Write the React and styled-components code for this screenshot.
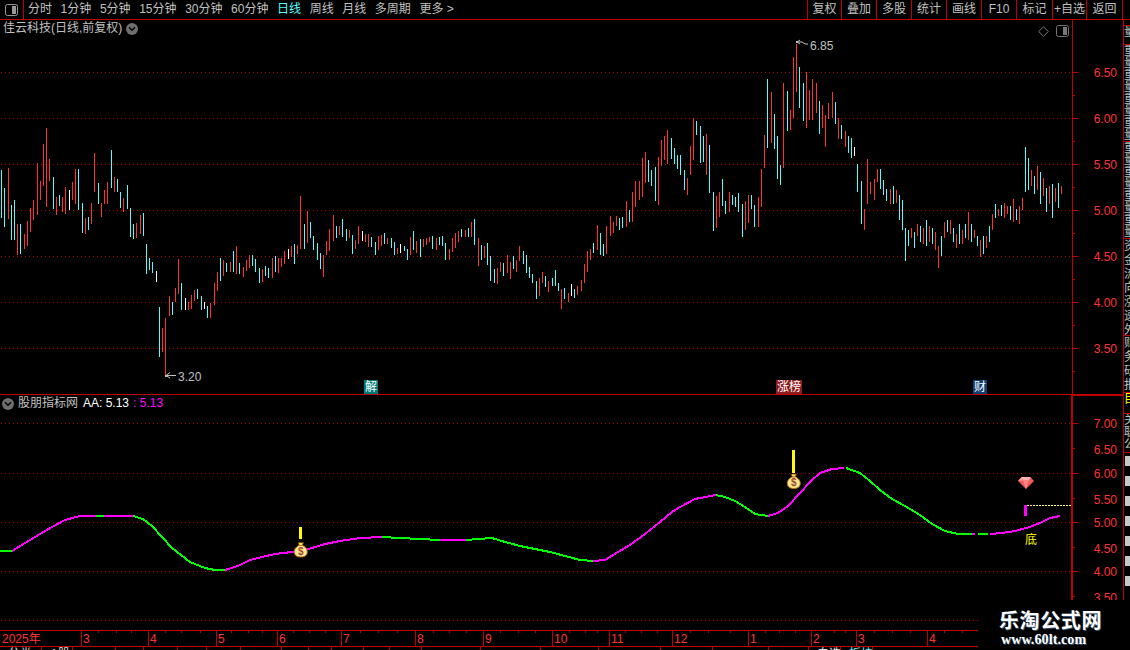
import React from 'react';
import styled, { createGlobalStyle } from 'styled-components';

const RED = '#c00000';
const UP = '#ff3232';
const DOWN = '#54fcfc';
const GREY = '#c0c0c0';

// candles read off the chart: "<x><colour><top>,<bottom>", r = up, c = down, w = flat
const parseBars = (src, x0, y0, scale) =>
  src.trim().split(/\s+/).map((item) => {
    const m = item.match(/^(\d+)([rcw])(\d+),(\d+)$/);
    return {
      x: x0 + Math.floor(+m[1] / scale),
      top: y0 + +m[3] / scale,
      bottom: y0 + +m[4] / scale,
      kind: m[2],
    };
  });

const barsA = parseBars(`
4c150,293 13c204,320 25r144,297 34c255,359 43c240,359 52r312,405 61c312,402 72r342,387 81r303,378 90r264,336
99r240,300 112r129,285 121r183,240 130r72,198 139r24,261 148r117,183 159c171,267 169r231,285 178c225,258 187r231,276
196r201,282 208w210,270 217r186,240 226r147,252 235c147,270 247c249,339 256r294,342 265c291,330 274r249,312 283r99,216
295c189,252 304r249,291 313r210,252 322r186,252 334c90,204 343r171,216 352c177,216 361c216,264 370r234,276 381c195,267
391c264,351 400c312,357 409r309,354 421r285,342 430c279,348 439c372,462 448c414,450 457c426,459 469w453,486 478c561,711
487r624,696 496r594,768 508r528,588 517c546,585 526r504,546 535r417,522 544c489,570 556w534,570 565r546,570 574r525,567
583r510,543 592c507,537 604c528,570 613w546,567 622c558,594 631r549,594 643r489,555 652r456,513 661c414,483 670r420,468
679c429,456 690r426,456 700c393,456 709r378,462 718c429,462 730r441,471 739r420,453 748r405,444 757c405,438 766c417,456
778c444,489 787r447,486 796c438,468 805c444,474 817r414,474 826c408,456 835r414,459 844r414,441 853r393,432 865w387,417
874r378,411 883c372,432 892r375,402`, 0, 120, 3);

const barsB = parseBars(`
1r258,417 13c342,417 22r303,399 31c336,384 40c378,420 52c399,450 61c429,477 70r435,501 79r393,435 88r357,423 100r315,393
109c348,384 118r348,375 127c327,381 139c357,393 148r360,384 157c375,432 166r390,417 175r348,402 187w363,393 196r372,396
205r372,411 214c381,411 226c396,435 235r378,420 244r375,408 253c369,402 262r384,402 274c384,414 283c396,435 292r414,432
301w402,429 313c408,423 322c417,450 331r381,435 340c363,420 349r393,429 361c387,441 370r387,411 379r384,405 388r381,396
397c378,417 409r384,420 418c381,405 427c378,408 436c399,450 448r417,450 457r384,426 466r369,414 475r363,396 484c357,381
496r360,381 505c354,381 514r336,381 523c327,405 535r384,468 544c405,450 553r408,444 562c399,465 571c438,513 583c477,519
592r474,522 601r456,486 610c459,498 622r435,489 631r456,507 640c438,477 649r450,486 658r408,453 670c423,462 679c435,489
688c471,504 697c492,519 709c513,567 718r504,558 727r486,519 736c498,531 745r513,546 757c504,528 766c480,528 775c519,543
784r537,597 793c534,567 805r549,576 814w522,558 823c537,564 832r528,555 844r510,543 853r462,519 862r423,486 871r417,450
880c399,429 892r345,420 901c369,435 910c402,438 919r348,432 931r318,378 940r336,369 949r318,348 958c324,360 967c321,354
979r273,351 988c300,336 997r246,336 1006r213,291 1018r213,270 1027r144,261 1036r126,219 1045c150,216 1054c180,228
1066c171,273 1075r141,285 1084r90,168 1093r78,150 1102r60,162 1114c84,147 1123c114,162 1132c135,177 1141c135,195
1153c180,240 1162r204,255 1171r108,195 1180r24,150 1189c33,75 1201c48,159 1210c78,156 1219r72,195 1228c105,249
1240c246,363 1249r258,354 1258r246,321 1267c207,288 1276c273,312 1288r246,306 1297c255,285 1306c261,291 1315c249,306`, 300, 110, 3);

const barsC = parseBars(`
7c522,620 16r513,600 25r495,580 34c495,537 43c525,590 55r501,590 64r417,531 73r315,414 82c147,354 94r186,339 103c252,357
112c318,447 121c405,465 130r159,414 142c183,303 151r240,300 160r81,264 169r42,186 178c111,234 190c159,273 199r126,294
208r180,270 217r147,270 229r159,249 238c213,312 247r225,294 256r255,351 265r219,267 277r186,264 286c216,282 295r264,327
304c285,327 316r303,351 325c318,369 334c324,384 343w351,378 352c402,486 364c453,582 373r537,600 382r387,522 391r456,492
403r447,510 412r417,456 421c417,477 430c450,495 439c477,513 451r477,522 460c468,522 469r480,519 478c495,570 487c510,600`, 740, 30, 3);

const barsD = parseBars(`
905c228,261 908c230,246 911r228,238 914c232,248 917r224,236 920c226,242 923r228,244 926c220,246 929r226,242 932c228,244
935r232,250 938r246,268 941c236,256 944r222,238 947c220,232 950r220,234 953c228,242 956r234,248 959c224,244 962r230,244
965c224,238 968r212,240 971c224,242 974r230,238 977c236,246 980r240,257 983c236,254 986r236,248 989c226,242 992r214,230
995c204,218 998r209,216 1001c205,216 1004r203,218 1007r206,214 1010c206,220 1013r199,222 1016c209,220 1019r206,224
1022r198,210 1025c147,192 1028c158,190 1031r170,186 1034c176,194 1037r166,190 1040c172,204 1043r178,196 1046c188,212
1049r186,204 1052c184,218 1055r188,202 1058c183,208 1061r186,194`, 0, 0, 1);

const candles = [...barsA, ...barsB, ...barsC, ...barsD];
const barColor = { r: UP, c: DOWN, w: '#ffffff' };

const priceLevels = [
  { label: '6.50', y: 72 },
  { label: '6.00', y: 118 },
  { label: '5.50', y: 164 },
  { label: '5.00', y: 210 },
  { label: '4.50', y: 256 },
  { label: '4.00', y: 302 },
  { label: '3.50', y: 348 },
];

const indicatorLevels = [
  { label: '7.00', y: 423, major: true },
  { label: '6.50', y: 448 },
  { label: '6.00', y: 473, major: true },
  { label: '5.50', y: 498 },
  { label: '5.00', y: 522, major: true },
  { label: '4.50', y: 547 },
  { label: '4.00', y: 571, major: true },
  { label: '3.50', y: 596 },
];

const MAGENTA = '#ff00ff';
const GREEN = '#00ff00';

const lineRuns = [
  [GREEN, '0,551 12,551'],
  [MAGENTA, '12,551 25,543 40,534 52,527 65,520 80,516 96,516'],
  [GREEN, '96,516 104,516'],
  [MAGENTA, '104,516 133,516'],
  [GREEN, '133,516 143,519 152,526 162,537 172,548 190,562 205,568 215,570 225,570'],
  [MAGENTA, '225,570 238,566 250,560 262,557 275,554 300,551 312,548 325,544 340,541 360,538 382,537'],
  [GREEN, '382,537 400,538 420,539 440,540'],
  [MAGENTA, '440,540 466,540'],
  [GREEN, '466,540 492,538 505,542 520,546 535,549 550,552 565,556 580,560 593,561'],
  [MAGENTA, '593,561 605,560 618,552 630,545 645,534 660,522 672,512 680,507 695,499 716,495'],
  [GREEN, '716,495 725,497 735,501 745,507 755,514 768,516'],
  [MAGENTA, '768,516 778,513 788,506 800,493 810,482 820,473 832,469 844,468'],
  [GREEN, '846,468 860,473 870,481 880,490 892,499 905,506 920,515 932,524 945,531 958,534 972,534'],
  [MAGENTA, '972,534 975,534'],
  [GREEN, '978,534 988,534'],
  [MAGENTA, '990,534 1002,533 1015,531 1030,527 1042,522 1050,518 1060,516'],
];

const monthLines = [
  { x: 81, label: '3' },
  { x: 148, label: '4' },
  { x: 216, label: '5' },
  { x: 277, label: '6' },
  { x: 341, label: '7' },
  { x: 415, label: '8' },
  { x: 483, label: '9' },
  { x: 552, label: '10' },
  { x: 609, label: '11' },
  { x: 672, label: '12' },
  { x: 748, label: '1' },
  { x: 811, label: '2' },
  { x: 856, label: '3' },
  { x: 927, label: '4' },
];

const minorTicks = [
  98, 116, 131, 165, 181, 200, 231, 248, 262, 293, 309, 325, 360, 378, 397, 433, 449, 466, 500, 518, 535, 569, 585,
  597, 625, 641, 657, 690, 708, 730, 765, 779, 795, 834, 845, 874, 892, 910, 944, 962,
];

// only the tabs whose tops show above the window edge carry a label
const bottomTabs = [
  { label: '分类', width: 42 }, { label: 'A股', width: 31 }, { width: 43 }, { width: 28 }, { width: 34 }, { width: 29 },
  { width: 34 }, { width: 41 }, { width: 27 }, { width: 23 }, { width: 32 }, { width: 26 }, { width: 32 }, { width: 59 },
  { width: 60 }, { width: 58 }, { width: 62 }, { width: 52 }, { width: 56 }, { width: 40 }, { label: '自选', width: 32 },
  { label: '板块', width: 32, active: true },
];

const leftTools = [
  { label: '分时' }, { label: '1分钟' }, { label: '5分钟' }, { label: '15分钟' }, { label: '30分钟' },
  { label: '60分钟' }, { label: '日线', active: true }, { label: '周线' }, { label: '月线' }, { label: '多周期' },
];

const rightTools = [
  ['复权', 34], ['叠加', 35], ['多股', 35], ['统计', 35], ['画线', 35], ['F10', 35], ['标记', 36], ['+自选', 34], ['返回', 37],
];

const GlobalStyle = createGlobalStyle`
  html, body { margin: 0; padding: 0; background: #000; overflow: hidden; }
  #root { width: 1130px; height: 650px; }
  svg { display: block; }
`;

const Screen = styled.div`
  position: relative;
  width: 1130px;
  height: 650px;
  overflow: hidden;
  background: #000;
  color: ${GREY};
  font: 12px/15px 'Liberation Sans', 'Noto Sans CJK SC', sans-serif;
`;

const Toolbar = styled.div`
  display: flex;
  align-items: stretch;
  height: 19px;
  border-bottom: 1px solid ${RED};
`;

const LayoutButton = styled.div`
  display: flex;
  align-items: center;
  justify-content: center;
  width: 23px;
  border-right: 1px solid ${RED};
`;

const PeriodList = styled.div`
  display: flex;
  align-items: center;
  gap: 8.6px;
  padding-left: 4px;
  flex: 1;
`;

const PeriodItem = styled.span`
  color: ${(p) => (p.$active ? '#55ffff' : GREY)};
  white-space: nowrap;
`;

const ToolGroup = styled.div`
  display: flex;
  margin-right: 7px;
`;

const ToolButton = styled.div`
  box-sizing: border-box;
  width: ${(p) => p.$width}px;
  border-left: 1px solid ${RED};
  text-align: center;
  line-height: 19px;
  white-space: nowrap;
  &:last-child { border-right: 1px solid ${RED}; }
`;

const Workspace = styled.div`
  display: flex;
  height: 630px;
`;

const LeftColumn = styled.div`
  width: 1123px;
  display: flex;
  flex-direction: column;
`;

const ChartRow = styled.div`
  position: relative;
  display: flex;
  height: ${(p) => p.$height}px;
  border-bottom: ${(p) => (p.$ruled ? `1px solid ${RED}` : 'none')};
`;

const ScaleColumn = styled.div`
  width: 50px;
  border-left: ${(p) => p.$line}px solid ${RED};
  border-top: ${(p) => (p.$capped ? `1px solid ${RED}` : 'none')};
  box-sizing: content-box;
`;

const PanelTitle = styled.div`
  position: absolute;
  top: ${(p) => p.$top}px;
  left: ${(p) => p.$left}px;
  display: flex;
  align-items: center;
  gap: 4px;
  white-space: nowrap;
`;

const CircleToggle = styled.span`
  display: flex;
  align-items: center;
  justify-content: center;
  width: 12px;
  height: 12px;
  border-radius: 50%;
  background: #6e6e6e;
`;

const Reading = styled.span`
  color: ${(p) => p.$color};
  margin-left: ${(p) => p.$gap || 0}px;
`;

const ViewTools = styled.div`
  position: absolute;
  top: 5px;
  right: 54px;
  display: flex;
  align-items: center;
  gap: 7px;
`;

const EventTag = styled.span`
  position: absolute;
  left: ${(p) => p.$x}px;
  top: 360px;
  height: 14px;
  padding: 0 1px;
  line-height: 14px;
  color: #fff;
  background: ${(p) => p.$bg};
`;

const BottomMark = styled.span`
  position: absolute;
  left: 1025px;
  top: 138px;
  color: #ffff00;
`;

const TimeAxis = styled.div`
  height: 15px;
  border-top: 1px solid ${RED};
  border-bottom: 1px solid ${RED};
`;

const TabRow = styled.div`
  display: flex;
  height: 3px;
  overflow: hidden;
`;

const Tab = styled.div`
  flex: none;
  box-sizing: border-box;
  width: ${(p) => p.$width}px;
  border-right: 1px solid ${RED};
  padding-left: 8px;
  height: 15px;
  color: ${(p) => (p.$active ? '#55ffff' : '#e0e0e0')};
  white-space: nowrap;
  overflow: hidden;
`;

const Rail = styled.div`
  width: 7px;
  box-sizing: border-box;
  border-left: 1px solid ${RED};
  display: flex;
  flex-direction: column;
  overflow: hidden;
`;

const RailCell = styled.div`
  height: ${(p) => p.$height}px;
  flex: none;
  border-bottom: 1px solid ${RED};
  overflow: hidden;
  width: 14px;
  font-size: 12px;
  line-height: ${(p) => p.$leading || 12}px;
  color: ${(p) => p.$color || GREY};
  word-break: break-all;
`;

const RailStack = styled.div`
  display: flex;
  flex-direction: column;
  gap: 10px;
  padding: 3px 0 0 1px;
`;

const RailBlock = styled.div`
  width: 6px;
  height: 10px;
  background: #c8c8c8;
`;

const Watermark = styled.div`
  position: absolute;
  left: 978px;
  top: 600px;
  width: 152px;
  height: 50px;
  background: #000;
  color: #fff;
  text-align: center;
`;

const WatermarkName = styled.div`
  position: absolute;
  left: 21px;
  top: 8px;
  font: 700 20px/24px 'Noto Sans CJK SC', sans-serif;
  letter-spacing: 0.6px;
  text-shadow: 1px 1px 0 #32506e;
`;

const WatermarkUrl = styled.div`
  position: absolute;
  left: 23px;
  top: 31px;
  font: 700 14px/18px 'Liberation Serif', serif;
  letter-spacing: 0.1px;
  text-shadow: 1px 1px 0 #32506e;
`;

const Chevron = ({ color = '#000' }) => (
  <svg width="8" height="6" viewBox="0 0 8 6">
    <path d="M1 1.2 L4 4.2 L7 1.2" fill="none" stroke={color} strokeWidth="1.4" />
  </svg>
);

const SplitIcon = ({ color }) => (
  <svg width="13" height="12" viewBox="0 0 13 12">
    <rect x="0.5" y="0.5" width="12" height="11" rx="2" fill="none" stroke={color} />
    <rect x="7" y="2" width="4" height="8" fill={color} />
  </svg>
);

const DiamondOutline = () => (
  <svg width="11" height="11" viewBox="0 0 11 11">
    <path d="M5.5 0.7 L10.3 5.5 L5.5 10.3 L0.7 5.5 Z" fill="none" stroke="#777" />
  </svg>
);

const DottedLevel = ({ y, right }) => (
  <line x1="1" x2={right} y1={y + 0.5} y2={y + 0.5} stroke="#aa0000" strokeDasharray="1 3" shapeRendering="crispEdges" />
);

const Candles = () =>
  candles.map((bar, i) => (
    <rect
      key={i}
      x={bar.x}
      y={bar.top}
      width="1"
      height={bar.bottom - bar.top}
      fill={barColor[bar.kind]}
      shapeRendering="crispEdges"
    />
  ));

// little callout at the high and low of the range
const PriceNote = ({ x, y, text, textX, textY, tail }) => (
  <g>
    <path d={tail} fill="none" stroke={GREY} />
    <rect x={x} y={y} width="2" height="2" fill={GREY} />
    <text x={textX} y={textY} fill={GREY} fontSize="12">
      {text}
    </text>
  </g>
);

const MoneyBag = ({ x, y }) => (
  <g transform={`translate(${x} ${y})`}>
    <path d="M4.5 0 H10 L8.8 3 H5.7 Z" fill="#ffd84a" stroke="#6b3d10" strokeWidth="0.7" />
    <path d="M5.4 3 C1.5 5 0.3 8 1 10.8 C1.6 13.4 4 14.5 7.2 14.5 C10.6 14.5 13 13.4 13.6 10.8 C14.2 8 13 5 9.2 3 Z" fill="#ffe98c" stroke="#b87414" />
    <text x="7.3" y="12.4" textAnchor="middle" fontSize="10" fontWeight="700" fill="#9c4a3a">
      $
    </text>
  </g>
);

const Gem = ({ x, y }) => (
  <g transform={`translate(${x} ${y})`}>
    <path d="M3.5 0 H12.5 L16 4 L8 12 L0 4 Z" fill="#f25a5a" />
    <path d="M3.5 0 H12.5 L11 3.4 H5 Z" fill="#ffb4b4" />
    <path d="M5 3.4 H11 L8 12 Z" fill="#ff8282" />
    <path d="M0 4 L3.5 0 L5 3.4 Z" fill="#ff9a9a" />
  </g>
);

const PriceChart = () => (
  <svg width="1072" height="374" viewBox="0 20 1072 374">
    {priceLevels.map((level) => (
      <DottedLevel key={level.label} y={level.y} right={1072} />
    ))}
    <Candles />
    <PriceNote x={796} y={41} text="6.85" textX={810} textY={50} tail="M797 42 L800 40 M797 42 L800 44 M797 42 L802 42 L805 44 L808 44" />
    <PriceNote x={165} y={375} text="3.20" textX={178} textY={381} tail="M166 375.5 L170 372.5 M166 375.5 L170 378 M166 375.5 L176 375.5" />
  </svg>
);

const PriceScale = () => (
  <svg width="50" height="374" viewBox="0 20 50 374">
    {priceLevels.map((level) => (
      <g key={level.label}>
        <rect x="0" y={level.y} width="5" height="1" fill={RED} />
        <rect x="0" y={level.y + 23} width="2" height="1" fill={RED} />
        <text x="44" y={level.y + 5} textAnchor="end" fill={UP} fontSize="12">
          {level.label}
        </text>
      </g>
    ))}
  </svg>
);

const IndicatorChart = () => (
  <svg width="1071" height="235" viewBox="0 395 1071 235">
    {[423, 473, 522, 571, 620].map((y) => (
      <DottedLevel key={y} y={y} right={1071} />
    ))}
    {lineRuns.map(([color, points], i) => (
      <polyline key={i} points={points} fill="none" stroke={color} strokeWidth="2" shapeRendering="crispEdges" />
    ))}
    <rect x="299" y="527" width="3" height="12" fill="#ffff00" />
    <MoneyBag x={293.5} y={542.5} />
    <rect x="792" y="450" width="3" height="23" fill="#ffff00" />
    <MoneyBag x={786.5} y={474} />
    <Gem x={1018} y={477} />
    <rect x="1024" y="505" width="3" height="11" fill={MAGENTA} />
    <line x1="1027" x2="1071" y1="505.5" y2="505.5" stroke="#ffff66" strokeDasharray="2 1" shapeRendering="crispEdges" />
  </svg>
);

const IndicatorScale = () => (
  <svg width="50" height="235" viewBox="0 396 50 235">
    {indicatorLevels.map((level) => (
      <g key={level.label}>
        <rect x="0" y={level.y} width={level.major ? 5 : 2} height="1" fill={RED} />
        <text x="44" y={level.y + (level.major ? 5 : 6)} textAnchor="end" fill={UP} fontSize="12">
          {level.label}
        </text>
      </g>
    ))}
  </svg>
);

const TimeScale = () => (
  <svg width="1123" height="15" viewBox="0 631 1123 15">
    {minorTicks.map((x) => (
      <rect key={x} x={x} y="631" width="1" height="2" fill={RED} />
    ))}
    <text x="2" y="643" fill={UP} fontSize="12">
      2025年
    </text>
    {monthLines.map((month) => (
      <g key={month.x}>
        <rect x={month.x} y="631" width="1" height="15" fill={RED} />
        <text x={month.x + 2} y="643" fill={UP} fontSize="12">
          {month.label}
        </text>
      </g>
    ))}
  </svg>
);

export default function App() {
  return (
    <Screen>
      <GlobalStyle />
      <Toolbar>
        <LayoutButton>
          <SplitIcon color="#999" />
        </LayoutButton>
        <PeriodList>
          {leftTools.map((tool) => (
            <PeriodItem key={tool.label} $active={tool.active}>
              {tool.label}
            </PeriodItem>
          ))}
          <PeriodItem>更多 &gt;</PeriodItem>
        </PeriodList>
        <ToolGroup>
          {rightTools.map(([label, width]) => (
            <ToolButton key={label} $width={width}>
              {label}
            </ToolButton>
          ))}
        </ToolGroup>
      </Toolbar>
      <Workspace>
        <LeftColumn>
          <ChartRow $height={374} $ruled>
            <PriceChart />
            <ScaleColumn $line={1}>
              <PriceScale />
            </ScaleColumn>
            <PanelTitle $top={1} $left={3}>
              佳云科技(日线,前复权)
              <CircleToggle>
                <Chevron />
              </CircleToggle>
            </PanelTitle>
            <ViewTools>
              <DiamondOutline />
              <SplitIcon color="#777" />
            </ViewTools>
            <EventTag $x={364} $bg="#007878">解</EventTag>
            <EventTag $x={776} $bg="#8c1c1c">涨榜</EventTag>
            <EventTag $x={973} $bg="#0f3f72">财</EventTag>
          </ChartRow>
          <ChartRow $height={235}>
            <IndicatorChart />
            <ScaleColumn $line={2} $capped>
              <IndicatorScale />
            </ScaleColumn>
            <PanelTitle $top={1} $left={2}>
              <CircleToggle>
                <Chevron />
              </CircleToggle>
              股朋指标网
              <Reading $color="#ffffff" $gap={1}>AA: 5.13</Reading>
              <Reading $color={MAGENTA}>: 5.13</Reading>
            </PanelTitle>
            <BottomMark>底</BottomMark>
          </ChartRow>
          <TimeAxis>
            <TimeScale />
          </TimeAxis>
          <TabRow>
            {bottomTabs.map((tab, i) => (
              <Tab key={i} $width={tab.width} $active={tab.active}>
                {tab.label}
              </Tab>
            ))}
          </TabRow>
        </LeftColumn>
        <Rail>
          <RailCell $height={5} />
          <RailCell $height={18}>量</RailCell>
          <RailCell $height={96}>重量重量重量重量</RailCell>
          <RailCell $height={96}>重量重量重量重量</RailCell>
          <RailCell $height={96} $leading={14}>资金流向涨速外盘</RailCell>
          <RailCell $height={56} $leading={14}>财务研报</RailCell>
          <RailCell $height={20} $color="#ffff00">目</RailCell>
          <RailCell $height={38}>关联公</RailCell>
          <RailStack>
            {[0, 1, 2, 3, 4, 5, 6].map((i) => (
              <RailBlock key={i} />
            ))}
          </RailStack>
        </Rail>
      </Workspace>
      <Watermark>
        <WatermarkName>乐淘公式网</WatermarkName>
        <WatermarkUrl>www.60lt.com</WatermarkUrl>
      </Watermark>
    </Screen>
  );
}
